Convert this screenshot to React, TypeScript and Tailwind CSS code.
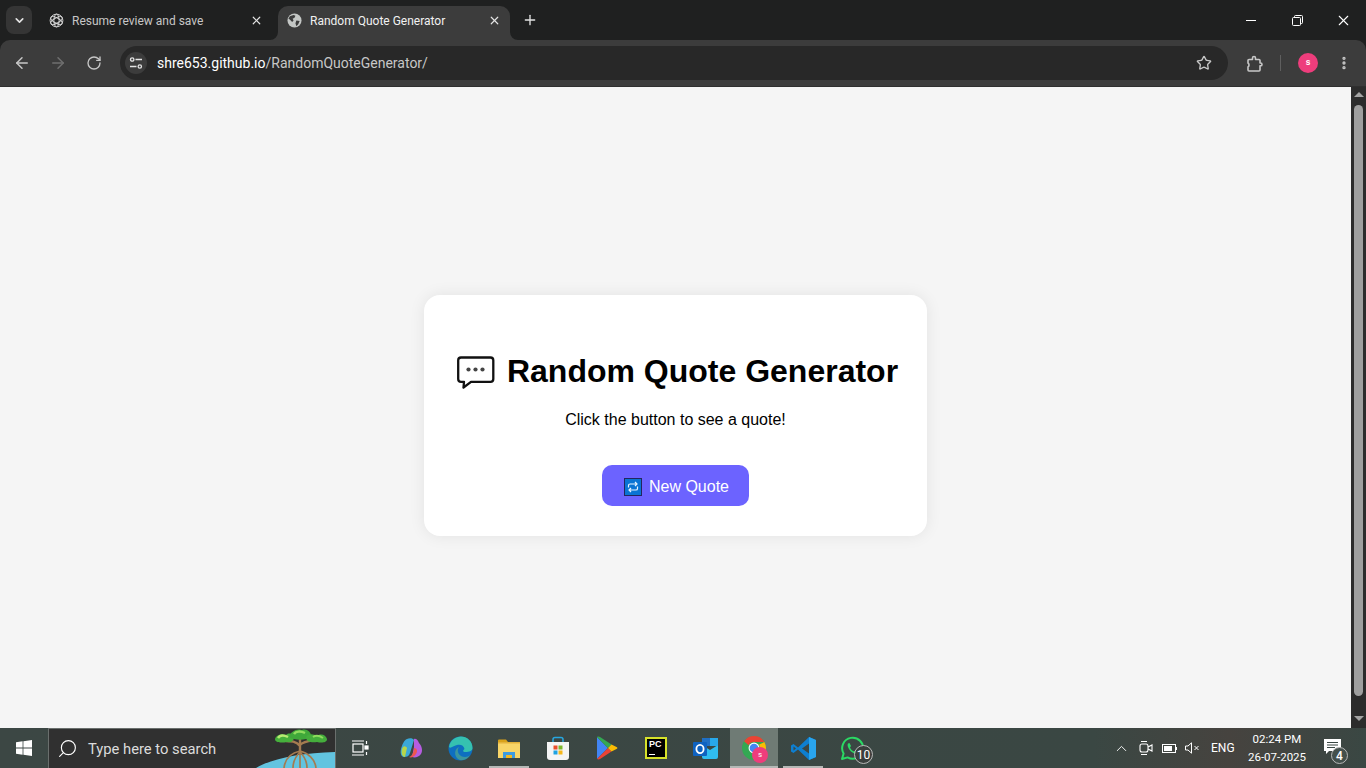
import React from "react";
import { ArrowLeft, ArrowRight, RotateCw, Star, X, Plus, ChevronDown, Search, ChevronUp, EllipsisVertical } from "lucide-react";

const ui = "font-['Roboto','Noto_Sans',sans-serif]";

function Globe() {
  return (
    <svg width="15" height="15" viewBox="0 0 16 16">
      <circle cx="8" cy="8" r="7.5" fill="#c4c7c5" />
      <path d="M3 3.5 L7 2 L9 3 L8 5 L6 6 L7 8 L5.5 9.5 L3 7 L1.5 6 Z M10 8 L13.5 8.5 L12 12 L10 14 L9 11 Z" fill="#3c3c3c" />
    </svg>
  );
}

function OpenAI() {
  return (
    <svg width="15" height="15" viewBox="0 0 16 16" fill="none" stroke="#d5d5d5" strokeWidth="1">
      <circle cx="8" cy="8" r="6.8" />
      <ellipse cx="8" cy="8" rx="6.8" ry="2.8" transform="rotate(30 8 8)" />
      <ellipse cx="8" cy="8" rx="6.8" ry="2.8" transform="rotate(90 8 8)" />
      <ellipse cx="8" cy="8" rx="6.8" ry="2.8" transform="rotate(150 8 8)" />
    </svg>
  );
}

function Tune() {
  return (
    <svg width="14" height="14" viewBox="0 0 14 14" fill="none" stroke="#e3e3e3" strokeWidth="1.3">
      <circle cx="3.2" cy="3.5" r="1.7" />
      <path d="M6.5 3.5H13M1 10.5H7.5" />
      <circle cx="10.8" cy="10.5" r="1.7" />
    </svg>
  );
}

function Restore() {
  return (
    <svg width="11" height="11" viewBox="0 0 11 11" fill="none" stroke="#fff" strokeWidth="1">
      <rect x="0.5" y="2.5" width="8" height="8" rx="1" />
      <path d="M2.5 2.5V1.5a1 1 0 0 1 1-1h6a1 1 0 0 1 1 1v6a1 1 0 0 1-1 1H8.5" />
    </svg>
  );
}

function ExtensionIcon() {
  return (
    <svg width="17" height="17" viewBox="0 0 17 17" fill="none" stroke="#c7c7c7" strokeWidth="1.6" strokeLinejoin="round" className="ml-[18px]">
      <path d="M3 4.5H6.5V3a1.5 1.5 0 0 1 3 0V4.5H13a1 1 0 0 1 1 1V8h.6a1.4 1.4 0 0 1 0 2.8H14V15a1 1 0 0 1-1 1H3a1 1 0 0 1-1-1V12a2.2 2.2 0 0 0 1-2 2.2 2.2 0 0 0-1-2V5.5a1 1 0 0 1 1-1Z" />
    </svg>
  );
}

function Tab({ active, title, icon }: { active?: boolean; title: string; icon: React.ReactNode }) {
  return (
    <div className={`relative flex items-center w-[232px] h-[34px] pl-[9px] pr-[9px] pb-[5px] ${active ? "bg-[#3c3c3c] rounded-t-[10px] text-[#f1f1f1]" : "text-[#c7c7c7]"}`}>
      {active && (
        <svg className="absolute left-[-8px] bottom-0" width="8" height="8" viewBox="0 0 8 8"><path d="M8 0V8H0A8 8 0 0 0 8 0Z" fill="#3c3c3c" /></svg>
      )}
      {active && (
        <svg className="absolute right-[-8px] bottom-0" width="8" height="8" viewBox="0 0 8 8"><path d="M0 0V8H8A8 8 0 0 1 0 0Z" fill="#3c3c3c" /></svg>
      )}
      {icon}
      <span className="ml-[8px] text-[12px] flex-1 whitespace-nowrap">{title}</span>
      <X size={13} strokeWidth={2.2} className="text-[#e3e3e3]" />
    </div>
  );
}

function Chrome() {
  return (
    <div className={`bg-[#1f2020] ${ui}`}>
      <div className="h-[40px] flex items-start pl-[6px]">
        <div className="mt-[6px] w-[26px] h-[28px] rounded-[8px] bg-[#353535] flex items-center justify-center mr-[8px]">
          <ChevronDown size={13} strokeWidth={3} className="text-[#e3e3e3]" />
        </div>
        <div className="mt-[6px] flex gap-[6px]">
          <Tab title="Resume review and save" icon={<OpenAI />} />
          <Tab active title="Random Quote Generator" icon={<Globe />} />
        </div>
        <Plus size={16} strokeWidth={2} className="mt-[12px] ml-[12px] text-[#e3e3e3]" />
        <div className="flex-1" />
        <div className="flex h-[40px] items-center text-white">
          <div className="w-[46px] flex justify-center"><div className="w-[10px] h-px bg-white" /></div>
          <div className="w-[46px] flex justify-center"><Restore /></div>
          <div className="w-[46px] flex justify-center"><X size={17} strokeWidth={1.5} /></div>
        </div>
      </div>
      <div className="h-[47px] flex items-center pl-[13px] bg-[#3c3c3c] rounded-t-[10px] border-b border-[#2f2f2f]">
        <ArrowLeft size={18} strokeWidth={2} className="text-[#c7c7c7]" />
        <ArrowRight size={18} strokeWidth={2} className="text-[#6f6f6f] ml-[18px]" />
        <RotateCw size={16} strokeWidth={2} className="text-[#c7c7c7] ml-[19px]" />
        <div className="ml-[18px] w-[1108px] h-[34px] rounded-full bg-[#282828] flex items-center pl-[5px] pr-[16px]">
          <div className="w-[22px] h-[22px] rounded-full bg-[#3c3c3c] flex items-center justify-center"><Tune /></div>
          <div className="ml-[10px] text-[14px] whitespace-nowrap flex-1"><span className="text-white">shre653.github.io</span><span className="text-[#c7c7c7]">/RandomQuoteGenerator/</span></div>
          <Star size={16} strokeWidth={2} className="text-[#c7c7c7]" />
        </div>
        <ExtensionIcon />
        <div className="w-px h-[16px] bg-[#5f5f5f] ml-[17px]" />
        <div className="ml-[17px] w-[20px] h-[20px] rounded-full bg-[#ee3d7c] text-white text-[9px] flex items-center justify-center font-semibold">s</div>
        <EllipsisVertical size={16} strokeWidth={3} className="text-[#c7c7c7] ml-[18px]" />
      </div>
    </div>
  );
}

function BubbleIcon() {
  return (
    <svg width="38" height="34" viewBox="0 0 38 34" fill="none">
      <path d="M4 1.5H33.5a2.8 2.8 0 0 1 2.8 2.8V23a2.8 2.8 0 0 1-2.8 2.8H14L6.5 31.5L7 25.8H4A2.8 2.8 0 0 1 1.2 23V4.3A2.8 2.8 0 0 1 4 1.5Z" stroke="#111" strokeWidth="2.3" strokeLinejoin="round" />
      <circle cx="11.5" cy="13.5" r="2.1" fill="#444" />
      <circle cx="18.5" cy="13.5" r="2.1" fill="#444" />
      <circle cx="25.5" cy="13.5" r="2.1" fill="#444" />
    </svg>
  );
}

function RepeatEmoji() {
  return (
    <svg width="18" height="18" viewBox="0 0 18 18" fill="none">
      <rect x="0.5" y="0.5" width="17" height="17" fill="#0a74d4" stroke="#23265f" />
      <path d="M4.5 9.5V7.6A1.6 1.6 0 0 1 6.1 6H12.5M11 4l2 2-2 2M13.5 8.5v1.9A1.6 1.6 0 0 1 11.9 12H5.5M7 10l-2 2 2 2" stroke="#e8f4ff" strokeWidth="1.2" />
    </svg>
  );
}

function Page() {
  return (
    <div className="flex-1 flex">
      <main className="flex-1 bg-[#f5f5f5] flex justify-center pt-[208px] font-['Liberation_Sans',Arial,sans-serif]">
        <div className="w-[503px] h-[241px] bg-white rounded-[16px] shadow-[0_0_16px_rgba(0,0,0,0.08)] flex flex-col items-center pt-[54px]">
          <div className="flex items-center h-[44px] ml-[4px] text-[32px] font-bold text-black leading-none">
            <span className="mr-[12px] mt-[4px] flex"><BubbleIcon /></span>
            <h1 className="whitespace-nowrap">Random Quote Generator</h1>
          </div>
          <p className="mt-[17px] text-[16px] leading-[20px] text-black">Click the button to see a quote!</p>
          <button className="mt-[35px] w-[147px] h-[41px] pl-[2px] pt-[2px] rounded-[10px] bg-[#6c63ff] text-white text-[16px] flex items-center justify-center">
            <RepeatEmoji />
            <span className="ml-[7px]">New Quote</span>
          </button>
        </div>
      </main>
      <div className="w-[15px] bg-[#2c2c2c] flex flex-col items-center pt-[5px]">
        <div className="w-0 h-0 border-l-[5px] border-r-[5px] border-b-[5px] border-l-transparent border-r-transparent border-b-[#a3a3a3]" />
        <div className="mt-[8px] w-[9px] h-[591px] rounded-full bg-[#9f9f9f]" />
        <div className="mt-[20px] w-0 h-0 border-l-[5px] border-r-[5px] border-t-[5px] border-l-transparent border-r-transparent border-t-[#a3a3a3]" />
      </div>
    </div>
  );
}

function Win() {
  return (
    <svg width="16" height="16" viewBox="0 0 16 16" fill="#fff">
      <path d="M0 2.2L6.6 1.3V7.6H0ZM7.4 1.2L16 0V7.6H7.4ZM0 8.4H6.6V14.7L0 13.8ZM7.4 8.4H16V16L7.4 14.8Z" />
    </svg>
  );
}

function TaskView() {
  return (
    <svg width="17" height="16" viewBox="0 0 17 16" fill="none" stroke="#fff" strokeWidth="1.2">
      <path d="M0 1H12M0 15H12" />
      <rect x="1" y="4" width="10" height="8" />
      <path d="M14.5 1V4M14.5 12V15" />
      <rect x="13" y="6" width="3" height="3" fill="#fff" />
    </svg>
  );
}

function Copilot() {
  return (
    <svg width="23" height="22" viewBox="0 0 23 22">
      <path d="M7 2C9 1 13 1 14 3L10 16C9 19 7 20 4 20C1 20 0 16 1 12C2 8 4 3 7 2Z" fill="#3aa8d8" />
      <path d="M2 12C3 8 6 9 7 11L5 20C2 20 1 16 2 12Z" fill="#b7d64a" />
      <path d="M14 2C17 1 18 4 19 6C22 9 23 14 21 17C19 20 15 21 12 20L14 10Z" fill="#b65de0" />
      <path d="M9 20C11 20 14 16 14 11C17 11 18 14 16 17C14 20 11 21 9 20Z" fill="#f0564f" />
    </svg>
  );
}

function Edge() {
  return (
    <svg width="25" height="25" viewBox="0 0 25 25">
      <circle cx="12.5" cy="12.5" r="12" fill="#0e6fc0" />
      <path d="M1 11C2 4 8 .5 13 .5C19 .5 24.5 5 24.5 12C24.5 15 21 16 17.5 16C14 16 15 14 16.5 13C16 9 12 8 9 9C5 10 2.5 13 1 11Z" fill="#35c1b0" />
      <path d="M10 23C6 20 6 13 11 11C8 15 11 21 17 21C19 21 21 20 22 19C20 23 14 26 10 23Z" fill="#8fdc5e" opacity="0.35" />
    </svg>
  );
}

function Folder() {
  return (
    <svg width="22" height="19" viewBox="0 0 22 19">
      <path d="M0 1.5A1 1 0 0 1 1 .5H8L10 3H0Z" fill="#d9a21a" />
      <rect x="0" y="3" width="22" height="16" fill="#f8d568" />
      <rect x="0" y="3" width="22" height="1.5" fill="#e3b23b" />
      <path d="M5 19V13H17V19H14V16H8V19Z" fill="#3d9be0" />
      <rect x="8" y="16" width="6" height="3" fill="#f4b81f" />
    </svg>
  );
}

function Store() {
  return (
    <svg width="24" height="24" viewBox="0 0 24 24">
      <path d="M7 7V3.5A2 2 0 0 1 9 1.5H15A2 2 0 0 1 17 3.5V7" fill="none" stroke="#27a7e0" strokeWidth="1.5" />
      <path d="M1 6H23V21A3 3 0 0 1 20 24H4A3 3 0 0 1 1 21Z" fill="#f4f4f4" />
      <rect x="7.5" y="9.5" width="4" height="4" fill="#ea4f2c" />
      <rect x="12.5" y="9.5" width="4" height="4" fill="#7cb82c" />
      <rect x="7.5" y="14.5" width="4" height="4" fill="#1ea2e2" />
      <rect x="12.5" y="14.5" width="4" height="4" fill="#f6b71b" />
    </svg>
  );
}

function Play() {
  return (
    <svg width="22" height="24" viewBox="0 0 22 24">
      <path d="M1 1L12 12L1 23Z" fill="#4285f4" />
      <path d="M1 1C2 .3 3 .4 4 1L15.5 8.5L12 12Z" fill="#34a853" />
      <path d="M1 23C2 23.7 3 23.6 4 23L15.5 15.5L12 12Z" fill="#ea4335" />
      <path d="M15.5 8.5L20.5 11C21.7 11.7 21.7 12.3 20.5 13L15.5 15.5L12 12Z" fill="#fbbc04" />
    </svg>
  );
}

function PyCharm() {
  return (
    <div className="w-[22px] h-[22px] bg-[#d7e22a] p-[2px] flex">
      <div className="flex-1 bg-black text-white text-[9px] font-bold leading-[11px] pl-[2px] font-['Liberation_Sans',sans-serif] relative">
        PC
        <div className="absolute left-[2px] bottom-[2px] w-[6px] h-[1.5px] bg-white" />
      </div>
    </div>
  );
}

function Outlook() {
  return (
    <svg width="25" height="23" viewBox="0 0 25 23">
      <path d="M9 1H23A2 2 0 0 1 25 3V9H9Z" fill="#1f6fc4" />
      <path d="M9 8L17 13L25 8V20A2 2 0 0 1 23 22H11A2 2 0 0 1 9 20Z" fill="#30bdf0" />
      <path d="M17 1H25V9H17Z" fill="#28a8ea" />
      <rect x="0" y="5" width="14" height="14" rx="1" fill="#0f62c0" />
      <ellipse cx="7" cy="12" rx="3.6" ry="4.1" fill="none" stroke="#fff" strokeWidth="1.8" />
    </svg>
  );
}

function ChromeLogo() {
  return (
    <svg width="24" height="24" viewBox="0 0 22 22">
      <circle cx="11" cy="11" r="11" fill="#34a853" />
      <path d="M11 0A11 11 0 0 1 20.5 5.5H11A5.5 5.5 0 0 0 6 8.5L1.9 4.8A11 11 0 0 1 11 0Z" fill="#ea4335" />
      <path d="M20.5 5.5A11 11 0 0 1 11 22L16 13A5.5 5.5 0 0 0 15.5 8Z" fill="#fbbc04" />
      <circle cx="11" cy="11" r="5" fill="#fff" />
      <circle cx="11" cy="11" r="4" fill="#4285f4" />
    </svg>
  );
}

function VSCode() {
  return (
    <svg width="25" height="25" viewBox="0 0 25 25">
      <path d="M18 1L25 4V21L18 24L7 13.5L2.5 17L0 15.5V9.5L2.5 8L7 11.5Z" fill="#0e7fd0" />
      <path d="M18 1L25 4V21L18 24V1Z" fill="#29a5ee" />
      <path d="M18 7.5L11 12.5L18 17.5Z" fill="#3c4743" />
      <path d="M2.5 10.5L5 12.5L2.5 14.5Z" fill="#3c4743" />
    </svg>
  );
}

function WhatsApp() {
  return (
    <svg width="25" height="25" viewBox="0 0 25 25" fill="none">
      <path d="M2 23L3.6 17.5A10.5 10.5 0 1 1 7.6 21.4Z" stroke="#2bd964" strokeWidth="2" strokeLinejoin="round" />
      <path d="M8 7.5C7 9 8 12.5 11 15.5C13.5 17.5 16.5 18.5 18 16.5L15.5 14.5L14 15.5C12 14.5 10.5 13 10 11.5L11 10L9.5 7Z" fill="#2bd964" />
    </svg>
  );
}

function Tree() {
  return (
    <svg className="absolute right-0 top-0" width="84" height="39" viewBox="0 0 84 39">
      <path d="M5 39C22 29 50 24 84 23V39Z" fill="#62c4e0" />
      <path d="M49 8V24M49 17C45 12 40 12 35 12M49 16C53 12 58 12 65 11" fill="none" stroke="#a57b50" strokeWidth="2.4" />
      <path d="M49 22C40 24 34 30 33 39M49 22C57 24 64 30 65 39M49 23C44 28 42 33 42 39M49 23C54 28 56 33 56 39M49 24V39" fill="none" stroke="#a57b50" strokeWidth="1.7" />
      <path d="M24 10C25 6 31 4 35 6C38 3 43 5 43 8C43 12 40 14 36 13C31 14 24 14 24 10Z" fill="#46b03c" />
      <path d="M38 8C39 3 46 -1 51 1C56 -1 61 4 60 8C56 11 44 12 38 8Z" fill="#3fa83a" />
      <path d="M55 8C57 4 63 5 66 7C70 4 75 6 76 10C76 14 70 14 66 13C61 14 55 13 55 8Z" fill="#45ad3c" />
      <path d="M27 9C29 6 33 6 37 8" fill="none" stroke="#b7ea72" strokeWidth="2.5" />
      <path d="M43 5C45 2 50 2 54 4" fill="none" stroke="#8fdc5e" strokeWidth="2.5" />
      <path d="M62 8C65 6 69 7 72 9" fill="none" stroke="#8fdc5e" strokeWidth="2" />
    </svg>
  );
}

function TaskSlot({ hl, line, children }: { hl?: boolean; line?: boolean; children: React.ReactNode }) {
  return (
    <div className={`relative h-full w-[48px] flex items-center justify-center ${hl ? "bg-[#6f7b75]" : ""}`}>
      {children}
      {line && <div className="absolute bottom-0 left-[4px] right-[4px] h-[2px] bg-[#b4b8b6]" />}
      {hl && <div className="absolute bottom-0 left-0 right-0 h-[2px] bg-[#b4b8b6]" />}
    </div>
  );
}

function Taskbar() {
  return (
    <footer className={`h-[40px] bg-[linear-gradient(90deg,#3c4744_0%,#3a4743_80%,#46433f_90%,#3a4743_100%)] flex items-stretch text-white ${ui}`}>
      <div className="w-[48px] flex items-center justify-center"><Win /></div>
      <div className="w-[288px] bg-[#303030] border border-[#6a6f6d] border-b-0 flex items-center pl-[8px] relative overflow-hidden">
        <Search size={21} strokeWidth={1.3} className="text-white -scale-x-100" />
        <span className="ml-[10px] mt-[1px] text-[14.75px] text-[#dcdcdc]">Type here to search</span>
        <Tree />
      </div>
      <div className="flex items-center h-full gap-[1px]">
        <div className="mr-[2px] h-full"><TaskSlot><TaskView /></TaskSlot></div>
        <TaskSlot><Copilot /></TaskSlot>
        <TaskSlot><Edge /></TaskSlot>
        <TaskSlot line><Folder /></TaskSlot>
        <TaskSlot><Store /></TaskSlot>
        <TaskSlot><Play /></TaskSlot>
        <TaskSlot><PyCharm /></TaskSlot>
        <TaskSlot><Outlook /></TaskSlot>
        <TaskSlot hl>
          <ChromeLogo />
          <div className="absolute left-[22px] top-[19px] w-[16px] h-[16px] rounded-full bg-[#ee3d7c] text-white text-[8px] flex items-center justify-center">s</div>
        </TaskSlot>
        <TaskSlot line><VSCode /></TaskSlot>
        <TaskSlot>
          <WhatsApp />
          <div className="absolute left-[26px] top-[17px] w-[19px] h-[19px] rounded-full bg-[#3a3f3d] border border-[#b8b8b8] text-white text-[12px] leading-none flex items-center justify-center">10</div>
        </TaskSlot>
      </div>
      <div className="flex-1" />
      <div className="flex items-center pr-[24px]">
        <ChevronUp size={17} strokeWidth={1.3} />
        <svg className="ml-[9px]" width="14" height="16" viewBox="0 0 14 16" fill="none" stroke="#fff" strokeWidth="1.1">
          <rect x="1" y="4" width="8" height="8" rx="2" />
          <path d="M9 7L13 5V11L9 9M2 1.5H8M2 14.5H8" />
        </svg>
        <svg className="ml-[9px]" width="15" height="9" viewBox="0 0 15 9" fill="none">
          <rect x=".5" y=".5" width="13" height="8" stroke="#fff" />
          <rect x="2" y="2" width="8" height="5" fill="#fff" />
          <rect x="14" y="3" width="1" height="3" fill="#fff" />
        </svg>
        <svg className="ml-[8px]" width="15" height="12" viewBox="0 0 15 12" fill="none" stroke="#fff" strokeWidth="1">
          <path d="M.5 4H3L6.5 .8V11.2L3 8H.5ZM9.5 4L13.5 8M13.5 4L9.5 8" />
        </svg>
        <span className="ml-[11px] text-[12px] w-[24px]">ENG</span>
        <div className="ml-[12px] w-[60px] text-center text-[11.5px] leading-[18px] whitespace-nowrap">
          <div>02:24 PM</div>
          <div>26-07-2025</div>
        </div>
        <div className="relative ml-[17px] w-[18px] h-[18px]">
          <svg width="17" height="15" viewBox="0 0 17 15"><path d="M0 0H17V12H5L2 15V12H0Z" fill="#fff" /><path d="M3 3.5H14M3 6H14M3 8.5H11" stroke="#3a4743" /></svg>
          <div className="absolute left-[7px] top-[8px] w-[17px] h-[17px] rounded-full bg-[#44504c] border border-[#b8b8b8] text-[12px] font-medium leading-none flex items-center justify-center">4</div>
        </div>
      </div>
    </footer>
  );
}

export default function App() {
  return (
    <div className="w-[1366px] h-[768px] overflow-hidden flex flex-col">
      <Chrome />
      <Page />
      <Taskbar />
    </div>
  );
}
